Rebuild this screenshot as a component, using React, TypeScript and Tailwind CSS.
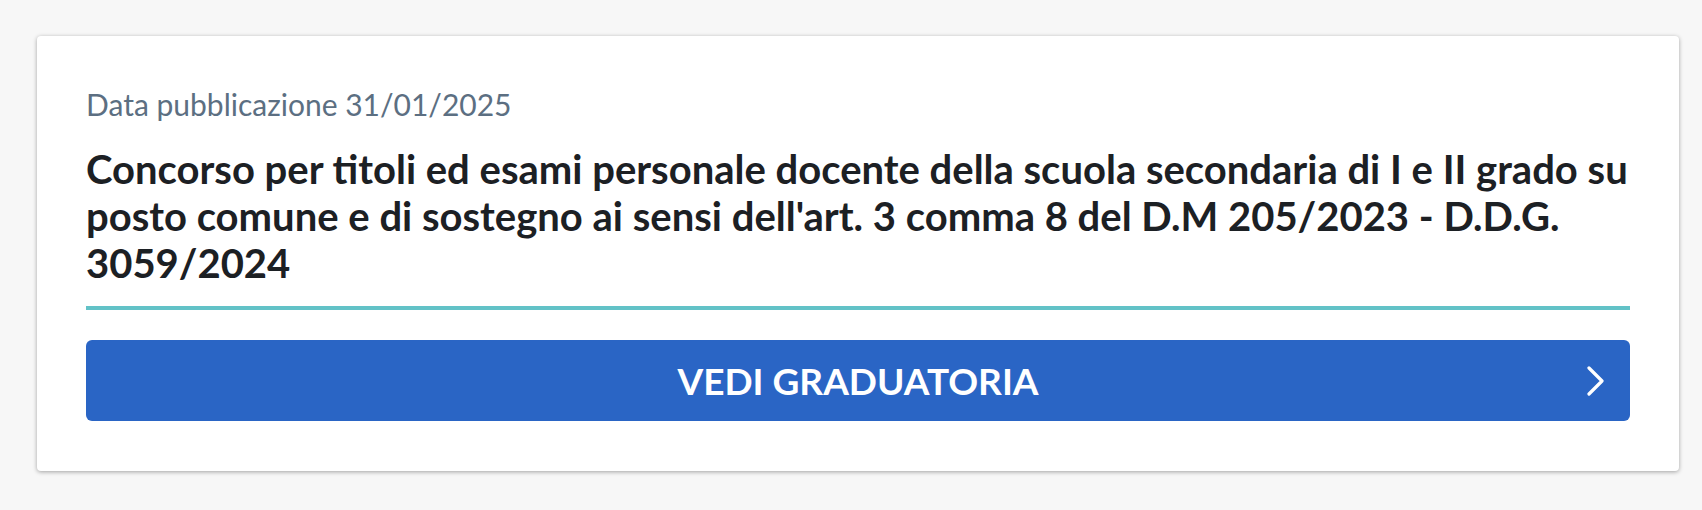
import React from 'react';

export default function App() {
  return (
    <div className="min-h-[510px] w-full bg-[#f7f7f7] pl-[37px] pr-[23px] pt-[36px] font-['Lato','Open_Sans',sans-serif]">
      <div className="rounded-[4px] bg-white px-[49px] pt-[48px] pb-[50px] shadow-[0_1px_4px_rgba(0,0,0,0.35)]">
        <p className="text-[30px] leading-[40px] text-[#5c6f82]">Data pubblicazione 31/01/2025</p>
        <h3 className="mt-[22px] border-b-4 border-[#62c2c7] pb-[19px] text-[40px] font-bold leading-[47px] text-[#1c2024]">
          Concorso per titoli ed esami personale docente della scuola secondaria di I e II grado su
          <br />
          posto comune e di sostegno ai sensi dell'art. 3 comma 8 del D.M 205/2023 - D.D.G.
          <br />
          3059/2024
        </h3>
        <button className="relative mt-[30px] flex h-[81px] w-full items-center justify-center rounded-[6px] bg-[#2a65c5] text-[37px] font-bold text-white">
          VEDI GRADUATORIA
          <svg
            className="absolute right-[24px] top-1/2 -translate-y-1/2"
            width="20"
            height="30"
            viewBox="0 0 20 30"
            fill="none"
          >
            <polyline
              points="3,2 16,15 3,28"
              stroke="white"
              strokeWidth="3.2"
              strokeLinecap="round"
              strokeLinejoin="round"
            />
          </svg>
        </button>
      </div>
    </div>
  );
}
